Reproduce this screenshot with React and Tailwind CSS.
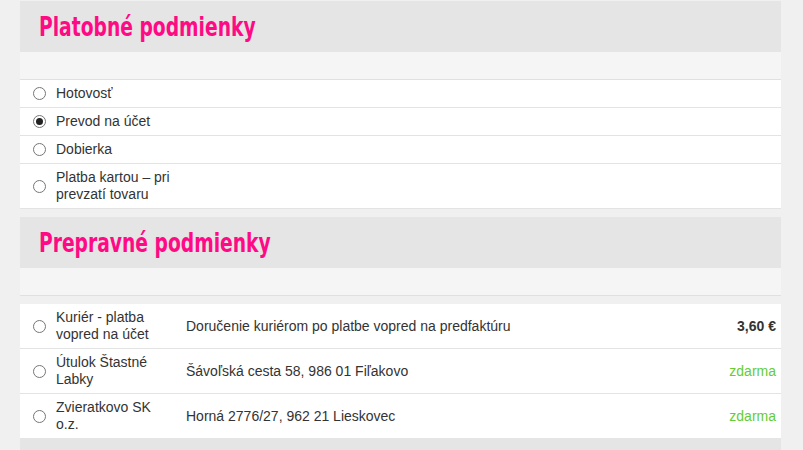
const payments = [
  { label: 'Hotovosť' },
  { label: 'Prevod na účet', checked: true },
  { label: 'Dobierka' },
  { label: 'Platba kartou – pri prevzatí tovaru' },
]

const shipping = [
  { label: 'Kuriér - platba vopred na účet', info: 'Doručenie kuriérom po platbe vopred na predfaktúru', price: '3,60 €' },
  { label: 'Útulok Štastné Labky', info: 'Šávoľská cesta 58, 986 01 Fiľakovo', free: true },
  { label: 'Zvieratkovo SK o.z.', info: 'Horná 2776/27, 962 21 Lieskovec', free: true },
]

function Radio({ checked }) {
  return (
    <span className="flex h-[13px] w-[13px] items-center justify-center rounded-full border border-[#767676] bg-white">
      {checked && <span className="h-[7px] w-[7px] rounded-full bg-[#222]" />}
    </span>
  )
}

function Heading({ children }) {
  return (
    <div className="flex h-[51px] items-center bg-[#e5e5e5] pl-[19px]">
      <h2
        className="origin-left scale-x-[0.77] text-[27px] font-bold leading-none text-[#ff0a84]"
        style={{ fontFamily: '"DejaVu Sans Condensed", "DejaVu Sans", sans-serif' }}
      >
        {children}
      </h2>
    </div>
  )
}

export default function App() {
  return (
    <div
      className="min-h-[450px] bg-[#f0f0f0] pt-px text-[14px] leading-[17px] text-[#333]"
      style={{ fontFamily: '"Liberation Sans", Arial, sans-serif' }}
    >
      <div className="ml-5 w-[761px]">
        <Heading>Platobné podmienky</Heading>
        <div className="h-[28px] border-b border-[#e0e0e0] bg-[#f5f5f5]" />
        <div className="bg-white">
          {payments.map((p) => (
            <div key={p.label} className="flex items-center border-b border-[#e3e3e3] py-[5px]">
              <div className="flex w-9 justify-center pl-[2px]">
                <Radio checked={p.checked} />
              </div>
              <div className="w-[117px]">{p.label}</div>
            </div>
          ))}
        </div>

        <div className="mt-2">
          <Heading>Prepravné podmienky</Heading>
          <div className="h-[28px] border-b border-[#e0e0e0] bg-[#f5f5f5]" />
        </div>

        <div className="mt-2 bg-white">
          {shipping.map((s, i) => (
            <div
              key={s.label}
              className={`flex items-center py-[5px] ${i < shipping.length - 1 ? 'border-b border-[#e3e3e3]' : ''}`}
            >
              <div className="flex w-9 justify-center pl-[2px]">
                <Radio />
              </div>
              <div className="w-[117px] shrink-0">{s.label}</div>
              <div className="ml-[13px] flex-1">{s.info}</div>
              <div className={`pr-[5px] ${s.free ? 'text-[#66cc33]' : 'font-bold'}`}>
                {s.free ? 'zdarma' : s.price}
              </div>
            </div>
          ))}
        </div>
        <div className="h-3 bg-[#e5e5e5]" />
      </div>
    </div>
  )
}
